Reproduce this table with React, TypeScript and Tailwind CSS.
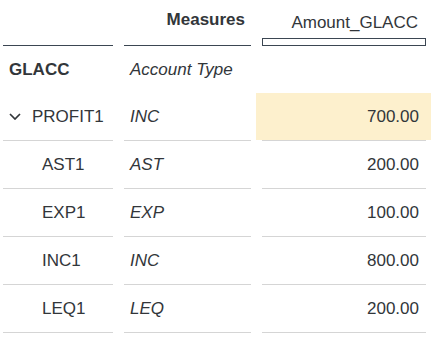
import React from 'react'

const font = { fontFamily: '"Liberation Sans", Arial, sans-serif' }

interface Row {
  glacc: string
  type: string
  amount: string
  parent?: boolean
}

const rows: Row[] = [
  { glacc: 'PROFIT1', type: 'INC', amount: '700.00', parent: true },
  { glacc: 'AST1', type: 'AST', amount: '200.00' },
  { glacc: 'EXP1', type: 'EXP', amount: '100.00' },
  { glacc: 'INC1', type: 'INC', amount: '800.00' },
  { glacc: 'LEQ1', type: 'LEQ', amount: '200.00' },
]

function Chevron() {
  return (
    <svg width="12" height="7" viewBox="0 0 12 7" className="shrink-0">
      <path d="M1 1 L6 6 L11 1" fill="none" stroke="#32363a" strokeWidth="1.7" />
    </svg>
  )
}

function Line({ first }: { first?: boolean }) {
  return <div className={`h-px bg-[#d5d5d5] ${first ? 'ml-[3px]' : 'ml-[6px]'} mr-[5px]`} />
}

export default function App() {
  return (
    <div className="w-[436px] h-[339px] bg-white overflow-hidden text-[17px] text-[#32363a]" style={font}>
      <div className="grid grid-cols-[118px_138px_175px]">
        {/* header */}
        <div className="flex flex-col">
          <div className="h-[45px]" />
          <div className="h-px bg-[#3b4652] ml-[3px] mr-[5px]" />
        </div>
        <div className="flex flex-col">
          <div className="h-[45px] pt-[10px] pr-[11px] text-right font-bold leading-[19px]">Measures</div>
          <div className="h-px bg-[#3b4652] ml-[6px] mr-[5px]" />
        </div>
        <div className="flex flex-col">
          <div className="h-[38px] pt-[13px] pr-[13px] text-right leading-[19px]">Amount_GLACC</div>
          <div className="h-[8px] border border-[#3b4652] ml-[6px] mr-[5px]" />
        </div>

        {/* dimension titles */}
        <div className="h-[47px] flex items-center pl-[9px] font-bold">GLACC</div>
        <div className="h-[47px] flex items-center pl-[12px] italic">Account Type</div>
        <div className="h-[47px]" />

        {rows.map((r) => (
          <React.Fragment key={r.glacc}>
            <div className="flex flex-col">
              <div className={`h-[47px] flex items-center ${r.parent ? 'pl-[9px] gap-[11px]' : 'pl-[42px]'}`}>
                {r.parent && <Chevron />}
                <span>{r.glacc}</span>
              </div>
              <Line first />
            </div>
            <div className="flex flex-col">
              <div className="h-[47px] flex items-center pl-[12px] italic">{r.type}</div>
              <Line />
            </div>
            <div className="flex flex-col">
              <div className={`h-[47px] flex items-center justify-end pr-[12px] ${r.parent ? 'bg-[#fdf0cd]' : ''}`}>
                {r.amount}
              </div>
              <Line />
            </div>
          </React.Fragment>
        ))}
      </div>
    </div>
  )
}
